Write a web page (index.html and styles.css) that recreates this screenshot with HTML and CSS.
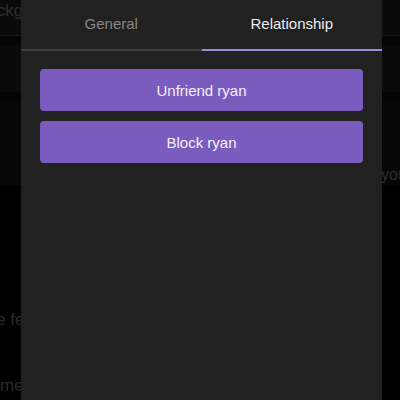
FILE: index.html
```html
<!DOCTYPE html>
<html>
<head>
<meta charset="utf-8">
<link rel="stylesheet" href="styles.css">
</head>
<body>
<div class="page">
  <div class="page-header"><span class="page-title">Background settings</span></div>
  <div class="page-gap"></div>
  <div class="page-block"></div>
  <div class="page-gap"></div>
  <div class="page-card">
    <div class="card-line right">you</div>
  </div>
  <div class="page-text"><span class="faint shift">the fe</span></div>
  <div class="page-text last"><span class="faint shift2">name</span></div>
</div>

<div class="sheet">
  <div class="tabs">
    <div class="tab">General</div>
    <div class="tab active">Relationship</div>
  </div>
  <div class="actions">
    <button class="action">Unfriend ryan</button>
    <button class="action">Block ryan</button>
  </div>
</div>
</body>
</html>
```
FILE: styles.css
```css
html, body {
  margin: 0;
  padding: 0;
  width: 400px;
  height: 400px;
  overflow: hidden;
  background: #000;
  font-family: "Liberation Sans", Arial, sans-serif;
}

.page {
  width: 400px;
  height: 400px;
  display: flex;
  flex-direction: column;
  color: #2b2b2b;
}

.page-header {
  height: 36px;
  box-sizing: border-box;
  padding-top: 1px;
  background: #0a0a0a;
  border-bottom: 1px solid #181818;
  display: flex;
  align-items: flex-start;
  font-size: 17px;
  overflow: hidden;
  white-space: nowrap;
}

.page-title {
  margin-left: -24px;
  color: #2e2e2e;
}

.page-gap {
  height: 9px;
  background: #040404;
}

.page-block {
  height: 47px;
  background: #0a0a0a;
}

.page-card {
  height: 84px;
  background: #070707;
  display: flex;
  align-items: flex-end;
  padding-bottom: 1px;
  box-sizing: border-box;
  font-size: 16px;
}

.card-line.right {
  margin-left: 381px;
  color: #2e2e2e;
  white-space: nowrap;
}

.page-text {
  height: 60px;
  display: flex;
  align-items: flex-end;
  font-size: 17px;
  padding-top: 85px;
  white-space: nowrap;
}

.page-text.last {
  padding-top: 6px;
}

.faint {
  color: #2a2a2a;
}

.shift {
  margin-left: -18px;
}

.shift2 {
  margin-left: -19px;
}

.sheet {
  position: fixed;
  top: 0;
  left: 21px;
  width: 361px;
  height: 400px;
  background: #212121;
  display: flex;
  flex-direction: column;
}

.tabs {
  display: flex;
  height: 51px;
}

.tab {
  flex: 1;
  display: flex;
  align-items: center;
  justify-content: center;
  padding-bottom: 3px;
  box-sizing: border-box;
  font-size: 15px;
  color: #878787;
  border-bottom: 2px solid #3f3f3f;
}

.tab.active {
  color: #ececec;
  border-bottom-color: #9f8bd6;
}

.actions {
  display: flex;
  flex-direction: column;
  gap: 10px;
  padding: 18px 19px 0 19px;
}

.action {
  height: 42px;
  border: 0;
  border-radius: 4px;
  background: #7a5cbe;
  color: #f4f0fb;
  font-family: "Liberation Sans", Arial, sans-serif;
  font-size: 15px;
  padding: 0;
  cursor: pointer;
}
```
